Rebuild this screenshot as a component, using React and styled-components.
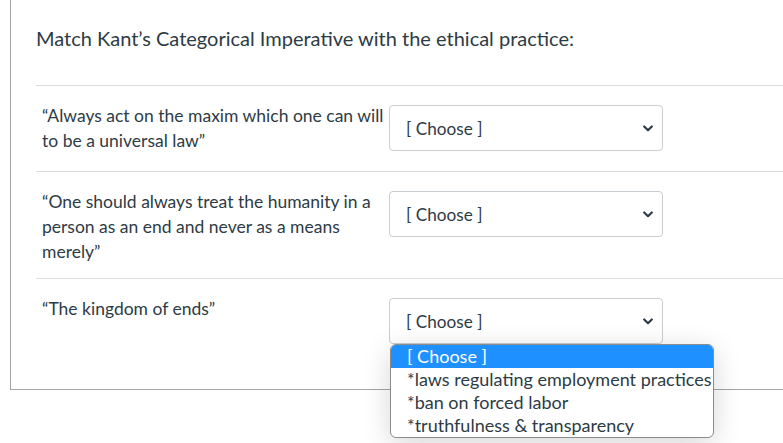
import React from 'react'
import styled, { createGlobalStyle } from 'styled-components'

const GlobalStyle = createGlobalStyle`
    html, body {
        margin: 0;
        padding: 0;
        background: #fff;
        overflow: hidden;
    }

    body {
        font-family: Lato, "Open Sans", sans-serif;
        color: #2d3b45;
    }
`

const Page = styled.div`
    width: 783px;
    height: 443px;
    padding-left: 10px;
    box-sizing: border-box;
    overflow: hidden;
`

const Card = styled.div`
    width: 830px;
    box-sizing: border-box;
    border: 1px solid #a5a5a5;
    border-top: none;
    padding: 0 25px 25px;
`

const Header = styled.div`
    padding: 24px 0 32px;

    h2 {
        margin: 0;
        font-size: 20px;
        line-height: 29px;
        font-weight: 400;
        color: #2d3b45;
    }
`

const Row = styled.div`
    display: grid;
    grid-template-columns: 353px 274px;
    align-items: start;
    border-top: 1px solid #dcdcdc;
    padding: 19px 0 20px;
`

const Prompt = styled.div`
    padding-left: 6px;
    font-size: 17.5px;
    line-height: 25px;
    margin: -2px 0 -6px;
`

const SelectWrap = styled.div`
    position: relative;
`

const SelectBox = styled.div`
    height: 46px;
    box-sizing: border-box;
    display: flex;
    align-items: center;
    justify-content: space-between;
    padding: 0 9px 0 16px;
    border: 1px solid #c7cdd1;
    border-radius: 4px;
    background: #fff;
    font-size: 17.2px;
    color: #2d3b45;

    svg {
        display: block;
    }
`

const Listbox = styled.ul`
    position: absolute;
    top: 100%;
    left: 1px;
    width: 324px;
    margin: 0;
    padding: 0;
    list-style: none;
    box-sizing: border-box;
    background: #fff;
    border: 1px solid #8c8c8c;
    border-radius: 6px;
    overflow: hidden;
    box-shadow: 0 6px 28px rgba(0, 0, 0, 0.16);
    z-index: 5;
`

const Option = styled.li`
    height: 23px;
    line-height: 23px;
    padding: 0 2px 0 16px;
    font-size: 18px;
    white-space: nowrap;
    color: ${p => p.selected ? '#fff' : '#2d3b45'};
    background: ${p => p.selected ? '#1e90ff' : 'transparent'};
`

const Chevron = () => (
    <svg width="10" height="7" viewBox="0 0 10 7" fill="none">
        <path d="M1.2 1.5 L5 5.2 L8.8 1.5" stroke="#2d3b45" strokeWidth="2.2" strokeLinecap="round" strokeLinejoin="round"/>
    </svg>
)

const options = [
    '[ Choose ]',
    '*laws regulating employment practices',
    '*ban on forced labor',
    '*truthfulness & transparency',
]

const prompts = [
    '\u201CAlways act on the maxim which one can will to be a universal law\u201D',
    '\u201COne should always treat the humanity in a person as an end and never as a means merely\u201D',
    '\u201CThe kingdom of ends\u201D',
]

const App = () => {
    return (
        <Page>
            <GlobalStyle/>
            <Card>
                <Header><h2>Match Kant{'\u2019'}s Categorical Imperative with the ethical practice:</h2></Header>
                {prompts.map((text, i) => (
                    <Row key={i}>
                        <Prompt>{text}</Prompt>
                        <SelectWrap>
                            <SelectBox><span>[ Choose ]</span><Chevron/></SelectBox>
                            {i === prompts.length - 1 &&
                                <Listbox>
                                    {options.map((o, j) => <Option key={o} selected={j === 0}>{o}</Option>)}
                                </Listbox>
                            }
                        </SelectWrap>
                    </Row>
                ))}
            </Card>
        </Page>
    )
}

export default App
